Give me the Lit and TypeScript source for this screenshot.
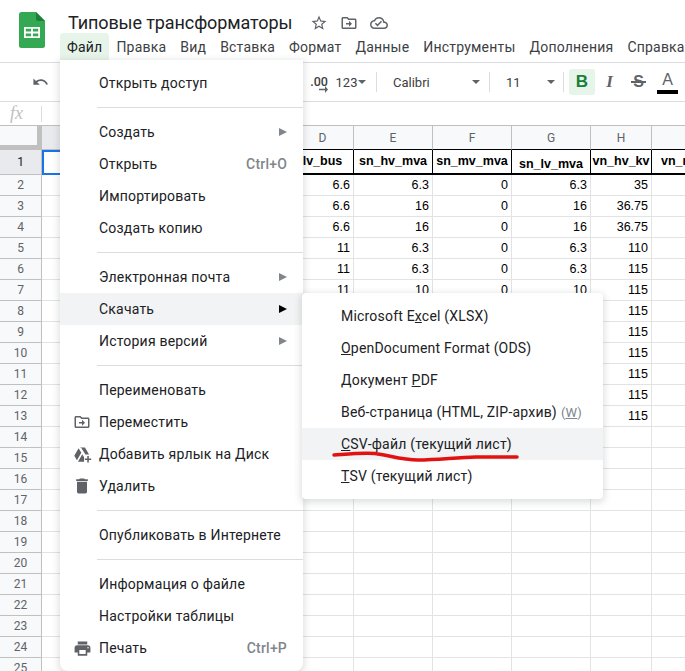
import { LitElement, css, html, svg } from "lit";
import { customElement } from "lit/decorators.js";

const ICONS = {
  star: "M22 9.24l-7.19-.62L12 2 9.19 8.63 2 9.24l5.46 4.73L5.82 21 12 17.27 18.18 21l-1.63-7.03L22 9.24zM12 15.4l-3.76 2.27 1-4.28-3.32-2.88 4.38-.38L12 6.1l1.71 4.04 4.38.38-3.32 2.88 1 4.28L12 15.4z",
  move: "M20 6h-8l-2-2H4c-1.1 0-2 .9-2 2v12c0 1.1.9 2 2 2h16c1.1 0 2-.9 2-2V8c0-1.1-.9-2-2-2zm0 12H4V6h5.17l2 2H20v10zm-8-1v-3H8v-2h4V9l4 4-4 4z",
  cloud: "M19.35 10.04C18.67 6.59 15.64 4 12 4 9.11 4 6.6 5.64 5.35 8.04 2.34 8.36 0 10.91 0 14c0 3.31 2.69 6 6 6h13c2.76 0 5-2.24 5-5 0-2.64-2.05-4.78-4.65-4.96zM19 18H6c-2.21 0-4-1.79-4-4 0-2.05 1.53-3.76 3.56-3.97l1.07-.11.5-.95C8.08 7.14 9.94 6 12 6c2.62 0 4.88 1.86 5.39 4.43l.3 1.5 1.53.11c1.56.1 2.78 1.41 2.78 2.96 0 1.65-1.35 3-3 3zm-9-1.5l-3.5-3.5 1.41-1.41L10 13.68l4.6-4.6 1.41 1.41z",
  undo: "M12.5 8c-2.65 0-5.05.99-6.9 2.6L2 7v9h9l-3.62-3.62c1.39-1.16 3.16-1.88 5.12-1.88 3.54 0 6.55 2.31 7.6 5.5l2.37-.78C21.08 11.03 17.15 8 12.5 8z",
  trash: "M6 19c0 1.1.9 2 2 2h8c1.1 0 2-.9 2-2V7H6v12zM19 4h-3.5l-1-1h-5l-1 1H5v2h14V4z",
  print: "M19 8H5c-1.66 0-3 1.34-3 3v6h4v4h12v-4h4v-6c0-1.66-1.34-3-3-3zm-3 11H8v-5h8v5zm3-7c-.55 0-1-.45-1-1s.45-1 1-1 1 .45 1 1-.45 1-1 1zm-1-9H6v4h12V3z",
  drive: "M8.2 3h6.9l5.2 9h-4.6L10.5 3.9zM7.1 4l3.4 5.9L5 19.4 1.6 13.5zM11.7 11.6l2.3 4v5.4H6.3z M18 14h2v3h3v2h-3v3h-2v-3h-3v-2h3z",
};

const ICON_SIZE: Partial<Record<keyof typeof ICONS, number>> = { trash: 20, print: 19, drive: 19 };

const icon = (name: keyof typeof ICONS, size = 18) => html`
  <svg width=${size} height=${size} viewBox="0 0 24 24" fill="currentColor" aria-hidden="true">
    ${svg`<path d=${ICONS[name]}></path>`}
  </svg>
`;

type MenuEntry = { label: string; icon?: keyof typeof ICONS; shortcut?: string; arrow?: boolean; active?: boolean } | "sep";

const FILE_MENU: MenuEntry[] = [
  { label: "Открыть доступ" },
  "sep",
  { label: "Создать", arrow: true },
  { label: "Открыть", shortcut: "Ctrl+O" },
  { label: "Импортировать" },
  { label: "Создать копию" },
  "sep",
  { label: "Электронная почта", arrow: true },
  { label: "Скачать", arrow: true, active: true },
  { label: "История версий", arrow: true },
  "sep",
  { label: "Переименовать" },
  { label: "Переместить", icon: "move" },
  { label: "Добавить ярлык на Диск", icon: "drive" },
  { label: "Удалить", icon: "trash" },
  "sep",
  { label: "Опубликовать в Интернете" },
  "sep",
  { label: "Информация о файле" },
  { label: "Настройки таблицы" },
  { label: "Печать", icon: "print", shortcut: "Ctrl+P" },
];

const TOP_MENU = ["Файл", "Правка", "Вид", "Вставка", "Формат", "Данные", "Инструменты", "Дополнения", "Справка"];

const COL_LETTERS = ["A", "B", "C", "D", "E", "F", "G", "H", "I"];
const HEADINGS: Record<string, string> = {
  D: "lv_bus",
  E: "sn_hv_mva",
  F: "sn_mv_mva",
  G: "sn_lv_mva",
  H: "vn_hv_kv",
  I: "vn_mv_kv",
};

// строки 2..13, столбцы D..H
const DATA: (string | number)[][] = [
  [6.6, 6.3, 0, 6.3, 35],
  [6.6, 16, 0, 16, 36.75],
  [6.6, 16, 0, 16, 36.75],
  [11, 6.3, 0, 6.3, 110],
  [11, 6.3, 0, 6.3, 115],
  [11, 10, 0, 10, 115],
  ["", "", "", "", 115],
  ["", "", "", "", 115],
  ["", "", "", "", 115],
  ["", "", "", "", 115],
  ["", "", "", "", 115],
  ["", "", "", "", 115],
];

@customElement("app-root")
export class AppRoot extends LitElement {
  static styles = css`
    :host {
      display: block;
      position: relative;
      width: 685px;
      height: 671px;
      overflow: hidden;
      background: #fff;
      font-family: Roboto, "Noto Sans", sans-serif;
      color: #202124;
    }

    .appbar {
      display: flex;
      box-sizing: border-box;
      padding: 12px 0 0 19px;
      white-space: nowrap;
      border-bottom: 1px solid #dadce0;
      height: 63px;
    }
    .logo {
      flex: none;
      margin-right: 23px;
    }
    .titles {
      display: flex;
      flex-direction: column;
      margin-left: -8px;
      min-width: 0;
    }
    .title-row {
      display: flex;
      align-items: center;
      height: 21px;
      padding-left: 8px;
      font-size: 18px;
      letter-spacing: -0.1px;
      color: #202124;
    }
    .title-icons {
      display: flex;
      align-items: center;
      gap: 12px;
      margin-left: 18px;
      color: #5f6368;
    }
    .topmenu {
      display: flex;
      align-items: center;
      height: 27px;
      font-size: 14px;
      letter-spacing: 0.2px;
    }
    .topmenu span {
      display: flex;
      align-items: center;
      height: 27px;
      padding: 0 7px;
      color: #3c4043;
    }
    .topmenu .open {
      background: #e6f4ea;
      border-radius: 4px 4px 0 0;
      color: #202124;
    }

    .toolbar {
      display: flex;
      align-items: center;
      height: 38px;
      padding-left: 32px;
      border-bottom: 1px solid #dadce0;
      white-space: nowrap;
      font-size: 13px;
      color: #5f6368;
    }
    .tool {
      flex: none;
      display: flex;
      align-items: center;
      justify-content: center;
    }
    .tool-undo { width: 17px; margin-right: 261px; }
    .tool-dec {
      width: 18px;
      margin-right: 9px;
      position: relative;
      font-weight: 500;
      color: #3c4043;
      font-size: 12.5px;
      height: 26px;
      line-height: 22px;
    }
    .tool-dec svg { position: absolute; left: 9px; top: 17px; }
    .tool-num { width: 19px; margin-right: 2px; color: #3c4043; }
    .caret {
      flex: none;
      width: 0;
      height: 0;
      border-left: 4px solid transparent;
      border-right: 4px solid transparent;
      border-top: 4px solid #5f6368;
    }
    .vsep {
      flex: none;
      width: 1px;
      height: 20px;
      background: #dadce0;
    }
    .sep-a { margin: 0 16px 0 10px; }
    .sep-b { margin: 0 16px 0 9px; }
    .sep-c { margin: 0 0 0 8px; }
    .font-name { width: 79px; justify-content: flex-start; color: #3c4043; }
    .font-size { width: 41px; justify-content: flex-start; color: #3c4043; }
    .btn-b {
      width: 26px;
      height: 26px;
      border-radius: 3px;
      background: #e6f4ea;
      color: #188038;
      font: 700 17px "Liberation Sans", Arial, sans-serif;
      margin-left: 5px;
    }
    .fmt {
      width: 29px;
      height: 26px;
      font: 700 16px "Liberation Sans", Arial, sans-serif;
      color: #5f6368;
    }
    .fmt-i { font: italic 700 17px "Liberation Serif", serif; }
    .fmt-s { position: relative; }
    .fmt-s::after {
      content: "";
      position: absolute;
      left: 7px;
      right: 7px;
      top: 12px;
      height: 2px;
      background: #5f6368;
    }
    .fmt-a {
      flex-direction: column;
      justify-content: flex-start;
      font-weight: 400;
      line-height: 21px;
    }
    .fmt-a i {
      display: block;
      width: 21px;
      height: 4px;
      background: #000;
    }

    .formula {
      display: flex;
      align-items: center;
      height: 23px;
      padding-left: 10px;
      border-bottom: 1px solid #c0c0c0;
    }
    .fx {
      width: 31px;
      font: italic 18px "Liberation Serif", serif;
      color: #c0c0c0;
    }
    .formula .vsep { height: 16px; }

    .sheet {
      display: grid;
      grid-template-columns: 42px 86px 82px 82px 62px 79px 79px 79px 61px 79px;
      grid-template-rows: 24px 25px repeat(24, 21px);
      font: 12.5px "Liberation Sans", Arial, sans-serif;
      color: #000;
    }
    .cell {
      box-sizing: border-box;
      border-right: 1px solid #e2e3e3;
      border-bottom: 1px solid #e2e3e3;
      padding: 0 3px;
      line-height: 20px;
      text-align: right;
      overflow: hidden;
      white-space: nowrap;
    }
    .corner {
      background: #f8f9fa;
      border-right: 5px solid #c0c0c0;
      border-bottom: 5px solid #c0c0c0;
      box-sizing: border-box;
    }
    .col-head,
    .row-head {
      box-sizing: border-box;
      display: flex;
      align-items: center;
      justify-content: center;
      background: #f8f9fa;
      color: #5f6368;
      font: 12px Roboto, sans-serif;
      border-right: 1px solid #c0c0c0;
      border-bottom: 1px solid #c0c0c0;
    }
    .col-head.titled { border-bottom-color: #000; }
    .selected-head {
      background: #e8eaed;
      color: #202124;
    }
    .title-cell {
      font-weight: 700;
      text-align: center;
      padding: 0;
      line-height: 23px;
      border-right: 1px solid #000;
      border-bottom: 2px solid #000;
    }
    .title-cell.low { line-height: 28px; }
    .title-cell.left { text-align: left; padding-left: 9px; }
    .title-cell.open { border-right: none; }
    .selected {
      border: 2px solid #1a73e8;
    }

    .menu {
      position: absolute;
      box-sizing: border-box;
      padding: 7px 0;
      background: #fff;
      border-radius: 4px;
      box-shadow: 0 2px 6px 2px rgba(60, 64, 67, 0.15);
      font-size: 14px;
      letter-spacing: 0.2px;
      white-space: nowrap;
    }
    .file-menu {
      left: 60px;
      top: 60px;
      width: 243px;
      height: 611px;
      border-radius: 0 0 8px 8px;
    }
    .file-menu .item { padding-left: 39px; padding-right: 16px; }
    .down-menu {
      left: 302px;
      top: 293px;
      width: 301px;
    }
    .down-menu .item { padding-left: 39px; padding-right: 16px; }
    .item {
      position: relative;
      display: flex;
      align-items: center;
      height: 32px;
      color: #202124;
    }
    .item.active { background: #f1f3f4; }
    .item .item-icon {
      position: absolute;
      left: 12px;
      top: 6px;
      width: 20px;
      height: 20px;
      display: flex;
      align-items: center;
      justify-content: center;
      color: #5f6368;
    }
    .shortcut {
      margin-left: auto;
      color: #80868b;
      font-weight: 500;
    }
    .arrow {
      margin-left: auto;
      width: 0;
      height: 0;
      border-top: 4px solid transparent;
      border-bottom: 4px solid transparent;
      border-left: 8px solid #80868b;
    }
    .active .arrow { border-left-color: #000; }
    .menu-sep {
      height: 1px;
      margin: 8px 0 8px 37px;
      background: #dadce0;
    }
    .hint { margin-left: 4px; color: #80868b; font-size: 13px; letter-spacing: 0; }

    .mark {
      position: absolute;
      left: 330px;
      top: 448px;
      pointer-events: none;
    }
  `;

  private renderEntry(entry: MenuEntry) {
    if (entry === "sep") return html`<div class="menu-sep"></div>`;
    return html`
      <div class="item ${entry.active ? "active" : ""}">
        ${entry.icon ? html`<span class="item-icon">${icon(entry.icon, ICON_SIZE[entry.icon] ?? 18)}</span>` : ""}
        <span>${entry.label}</span>
        ${entry.shortcut ? html`<span class="shortcut">${entry.shortcut}</span>` : ""}
        ${entry.arrow ? html`<span class="arrow"></span>` : ""}
      </div>
    `;
  }

  private renderSheet() {
    const rows = [];
    for (let r = 2; r <= 25; r++) {
      const values = DATA[r - 2] ?? [];
      rows.push(html`<div class="row-head">${r}</div>`);
      COL_LETTERS.forEach((_, c) => {
        const value = c >= 3 && c <= 7 ? values[c - 3] : "";
        rows.push(html`<div class="cell">${value}</div>`);
      });
    }
    return html`
      <div class="sheet">
        <div class="corner"></div>
        ${COL_LETTERS.map((l) => {
          const classes = ["col-head"];
          if (l === "A") classes.push("selected-head");
          if (HEADINGS[l]) classes.push("titled");
          return html`<div class=${classes.join(" ")}>${l}</div>`;
        })}
        <div class="row-head selected-head">1</div>
        ${COL_LETTERS.map((l, i) => {
          if (i === 0) return html`<div class="cell selected"></div>`;
          const classes = ["cell", "title-cell"];
          if (l === "G") classes.push("low");
          if (l === "I") classes.push("left", "open");
          return html`<div class=${classes.join(" ")}>${HEADINGS[l] ?? ""}</div>`;
        })}
        ${rows}
      </div>
    `;
  }

  render() {
    return html`
      <header class="appbar">
        <svg class="logo" width="26" height="36" viewBox="0 0 26 36" aria-hidden="true">
          <path d="M2.5 0H17l9 9v24.5a2.5 2.5 0 0 1-2.5 2.5h-21A2.5 2.5 0 0 1 0 33.5v-31A2.5 2.5 0 0 1 2.5 0z" fill="#34a853"></path>
          <path d="M17 0l9 9h-6.5A2.5 2.5 0 0 1 17 6.5z" fill="#188038"></path>
          <path d="M5 15h16v11H5zm1.8 1.8v2.8h5.3v-2.8zm7.1 0v2.8h5.3v-2.8zm-7.1 4.6v2.8h5.3v-2.8zm7.1 0v2.8h5.3v-2.8z" fill="#fff" fill-rule="evenodd"></path>
        </svg>
        <div class="titles">
          <div class="title-row">
            <span>Типовые трансформаторы</span>
            <span class="title-icons">${icon("star")}${icon("move")}${icon("cloud")}</span>
          </div>
          <nav class="topmenu">
            ${TOP_MENU.map((m, i) => html`<span class=${i === 0 ? "open" : ""}>${m}</span>`)}
          </nav>
        </div>
      </header>

      <div class="toolbar">
        <span class="tool tool-undo">${icon("undo", 18)}</span>
        <span class="tool tool-dec">.00
          <svg width="9" height="7" viewBox="0 0 9 7" aria-hidden="true"><path d="M0 2.7h6V0l3 3.5L6 7V4.3H0z" fill="#5f6368"></path></svg>
        </span>
        <span class="tool tool-num">123</span>
        <span class="caret"></span>
        <span class="vsep sep-a"></span>
        <span class="tool font-name">Calibri</span>
        <span class="caret"></span>
        <span class="vsep sep-b"></span>
        <span class="tool font-size">11</span>
        <span class="caret"></span>
        <span class="vsep sep-c"></span>
        <span class="tool btn-b">B</span>
        <span class="tool fmt fmt-i">I</span>
        <span class="tool fmt fmt-s">S</span>
        <span class="tool fmt fmt-a">A<i></i></span>
      </div>

      <div class="formula">
        <span class="fx">fx</span>
        <span class="vsep"></span>
      </div>

      ${this.renderSheet()}

      <div class="menu file-menu">${FILE_MENU.map((e) => this.renderEntry(e))}</div>

      <div class="menu down-menu">
        <div class="item"><span>Microsoft E<u>x</u>cel (XLSX)</span></div>
        <div class="item"><span><u>O</u>penDocument Format (ODS)</span></div>
        <div class="item"><span>Документ <u>P</u>DF</span></div>
        <div class="item">
          <span>Веб-страница (HTML, ZIP-архив)</span>
          <span class="hint">(<u>W</u>)</span>
        </div>
        <div class="item active"><span><u>C</u>SV-файл (текущий лист)</span></div>
        <div class="item"><span><u>T</u>SV (текущий лист)</span></div>
      </div>

      <svg class="mark" width="194" height="14" viewBox="0 0 194 14" aria-hidden="true">
        <path
          d="M4 7C18 6 32 4.5 45 5.5C58 7 72 12 88 12C108 12 125 9.5 146 9C160 8.7 175 9 187 9"
          fill="none"
          stroke="#e21212"
          stroke-width="3.5"
          stroke-linecap="round"
        ></path>
      </svg>
    `;
  }
}
